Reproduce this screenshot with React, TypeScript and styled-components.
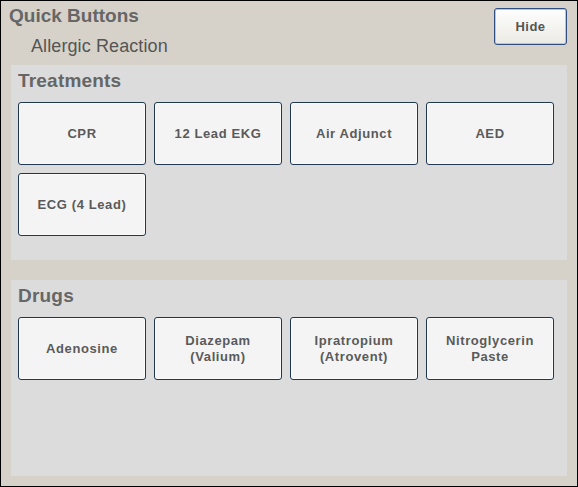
import React from "react";
import styled, { createGlobalStyle } from "styled-components";

const Global = createGlobalStyle`
  html, body { margin: 0; padding: 0; background: #d6d2ca; }
  * { box-sizing: border-box; }
`;

const Window = styled.div`
  width: 578px;
  height: 487px;
  border: 1px solid #000;
  background: #d6d2ca;
  display: flex;
  flex-direction: column;
  font-family: "Liberation Sans", Arial, sans-serif;
`;

const Header = styled.div`
  display: flex;
  justify-content: space-between;
  align-items: flex-start;
  padding: 4px 10px 0 8px;
  height: 64px;
`;

const TitleBlock = styled.div`
  display: flex;
  flex-direction: column;
`;

const Title = styled.div`
  font-size: 19px;
  font-weight: bold;
  line-height: 22px;
  color: #666;
`;

const Subtitle = styled.div`
  font-size: 18px;
  line-height: 20px;
  letter-spacing: 0.1px;
  color: #555;
  margin-top: 9px;
  padding-left: 22px;
`;

const HideButton = styled.button`
  margin-top: 3px;
  width: 73px;
  height: 37px;
  border: 1px solid #2f4f82;
  border-radius: 3px;
  box-shadow: inset 0 0 0 1px #b3c5e6;
  background: linear-gradient(#fefefe, #ebeae4);
  font-family: "Liberation Sans", Arial, sans-serif;
  font-size: 13px;
  font-weight: bold;
  letter-spacing: 0.5px;
  color: #555;
  padding: 0;
`;

const Panel = styled.section<{ $height: number; $gap: number }>`
  margin: ${(p) => p.$gap}px 10px 0 10px;
  height: ${(p) => p.$height}px;
  background: #dcdcdc;
  padding: 5px 13px 0 7px;
`;

const PanelTitle = styled.div`
  font-size: 19px;
  font-weight: bold;
  line-height: 22px;
  letter-spacing: 0.2px;
  color: #666;
  margin-bottom: 10px;
`;

const Grid = styled.div`
  display: grid;
  grid-template-columns: repeat(4, 128px);
  grid-auto-rows: 63px;
  gap: 8px;
`;

const QuickButton = styled.button`
  border: 1px solid #1f3753;
  border-radius: 3px;
  background: #f4f4f4;
  box-shadow: inset 0 0 0 1px #fbfbfb;
  font-family: "Liberation Sans", Arial, sans-serif;
  font-size: 13px;
  font-weight: bold;
  letter-spacing: 0.6px;
  line-height: 16px;
  color: #5a5a5a;
  padding: 0 4px;
  white-space: pre-line;
`;

const treatments = ["CPR", "12 Lead EKG", "Air Adjunct", "AED", "ECG (4 Lead)"];
const drugs = ["Adenosine", "Diazepam\n(Valium)", "Ipratropium\n(Atrovent)", "Nitroglycerin\nPaste"];

export default function App() {
  return (
    <>
      <Global />
      <Window>
        <Header>
          <TitleBlock>
            <Title>Quick Buttons</Title>
            <Subtitle>Allergic Reaction</Subtitle>
          </TitleBlock>
          <HideButton>Hide</HideButton>
        </Header>
        <Panel $height={195} $gap={0}>
          <PanelTitle>Treatments</PanelTitle>
          <Grid>
            {treatments.map((t) => (
              <QuickButton key={t}>{t}</QuickButton>
            ))}
          </Grid>
        </Panel>
        <Panel $height={196} $gap={20}>
          <PanelTitle>Drugs</PanelTitle>
          <Grid>
            {drugs.map((t) => (
              <QuickButton key={t}>{t}</QuickButton>
            ))}
          </Grid>
        </Panel>
      </Window>
    </>
  );
}
